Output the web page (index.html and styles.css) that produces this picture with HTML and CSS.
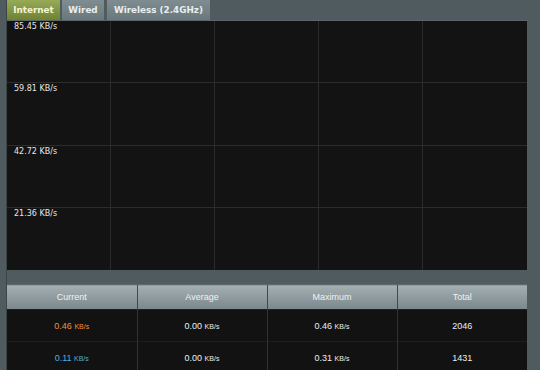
FILE: index.html
```html
<!DOCTYPE html>
<html>
<head>
<meta charset="utf-8">
<link rel="stylesheet" href="styles.css">
</head>
<body>
<div class="page">
  <div class="tabs">
    <div class="tab tab-active">Internet</div>
    <div class="tab tab-wired">Wired</div>
    <div class="tab tab-wireless">Wireless (2.4GHz)</div>
  </div>
  <div class="chart">
    <div class="cell"><span class="label">85.45 KB/s</span></div><div class="cell"></div><div class="cell"></div><div class="cell"></div><div class="cell"></div>
    <div class="cell"><span class="label">59.81 KB/s</span></div><div class="cell"></div><div class="cell"></div><div class="cell"></div><div class="cell"></div>
    <div class="cell"><span class="label">42.72 KB/s</span></div><div class="cell"></div><div class="cell"></div><div class="cell"></div><div class="cell"></div>
    <div class="cell"><span class="label">21.36 KB/s</span></div><div class="cell"></div><div class="cell"></div><div class="cell"></div><div class="cell"></div>
  </div>
  <table class="stats">
    <thead>
      <tr><th>Current</th><th>Average</th><th>Maximum</th><th>Total</th></tr>
    </thead>
    <tbody>
      <tr>
        <td><span class="rx">0.46</span> <span class="unit rx">KB/s</span></td>
        <td>0.00 <span class="unit">KB/s</span></td>
        <td>0.46 <span class="unit">KB/s</span></td>
        <td>2046</td>
      </tr>
      <tr>
        <td><span class="tx">0.11</span> <span class="unit tx">KB/s</span></td>
        <td>0.00 <span class="unit">KB/s</span></td>
        <td>0.31 <span class="unit">KB/s</span></td>
        <td>1431</td>
      </tr>
    </tbody>
  </table>
</div>
</body>
</html>
```

FILE: styles.css
```css
html, body {
  margin: 0;
  padding: 0;
}
body {
  background: #4f5b5e;
  width: 540px;
  height: 370px;
  overflow: hidden;
  font-family: "Liberation Sans", Arial, sans-serif;
}
.page {
  margin-left: 6px;
  border-left: 1px solid #3c4548;
  height: 370px;
  width: 520px;
}
.tabs {
  display: flex;
  height: 20px;
}
.tab {
  height: 20px;
  box-sizing: border-box;
  font-family: "DejaVu Sans", Verdana, sans-serif;
  font-weight: bold;
  font-size: 8.8px;
  line-height: 21px;
  text-align: center;
  color: #e9eef0;
  background: linear-gradient(#7f8d91, #6a787b);
}
.tab-active {
  width: 53px;
  color: #f4f4d4;
  background: linear-gradient(#97aa58, #6f8232);
}
.tab-wired {
  width: 42px;
  margin-left: 2px;
}
.tab-wireless {
  width: 103px;
  margin-left: 3px;
}
.chart {
  width: 520px;
  height: 250px;
  box-sizing: border-box;
  background: #131313;
  border-top: 1px solid #5c6669;
  display: grid;
  grid-template-columns: repeat(5, 1fr);
  grid-template-rows: repeat(4, 1fr);
}
.cell {
  border-right: 1px solid #2a2a2a;
  border-bottom: 1px solid #2c2c2c;
  padding: 1px 0 0 7px;
  font-size: 0;
  line-height: 0;
}
.cell:nth-child(5n) {
  border-right: none;
}
.cell:nth-last-child(-n+5) {
  border-bottom: none;
}
.label {
  display: block;
  font-family: "DejaVu Sans", Verdana, sans-serif;
  font-size: 8px;
  line-height: 10px;
  color: #e6e6e6;
  white-space: nowrap;
}
.stats {
  margin-top: 14px;
  width: 520px;
  border-collapse: collapse;
  table-layout: fixed;
}
.stats th {
  height: 24px;
  padding: 0;
  font-size: 9px;
  font-weight: normal;
  color: #eef2f3;
  background: linear-gradient(#a4afb2, #7a878b);
  border-left: 1px solid #3f484b;
  border-top: 1px solid #5e686b;
}
.stats th:first-child {
  border-left: none;
}
.stats td {
  height: 31px;
  padding: 0;
  text-align: center;
  font-size: 9px;
  color: #eeeeee;
  background: #121212;
  border-left: 1px solid #2e3436;
  border-top: 1px solid #1e1e1e;
}
.stats td:first-child {
  border-left: none;
}
.unit {
  font-size: 7px;
}
.rx {
  color: #f09040;
}
.tx {
  color: #4fb0dc;
}
```
